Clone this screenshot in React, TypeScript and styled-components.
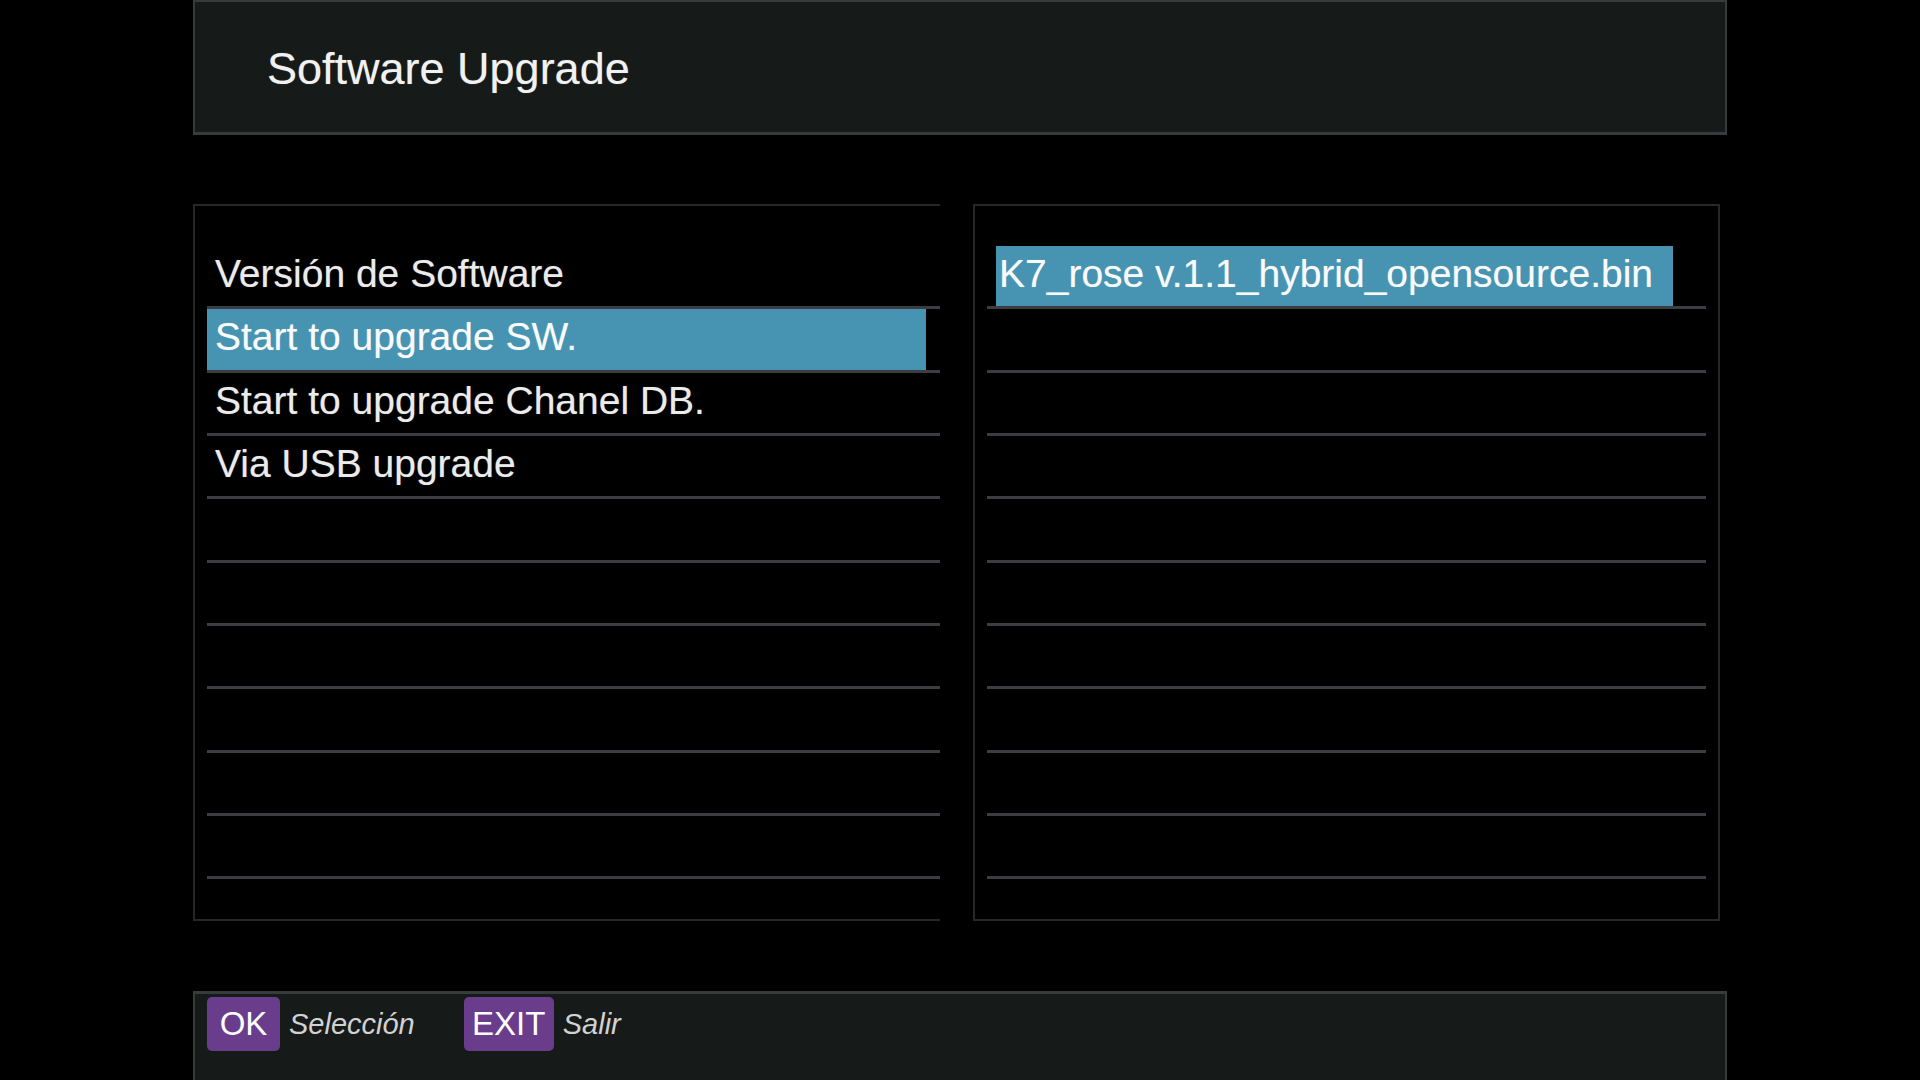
import React from 'react';
import styled, { createGlobalStyle } from 'styled-components';

const GlobalStyle = createGlobalStyle`
    html, body {
        margin: 0;
        padding: 0;
        background: #000;
    }
    * {
        box-sizing: border-box;
    }
`

const ROW_COUNT = 10

const menuItems = [
    "Versión de Software",
    "Start to upgrade SW.",
    "Start to upgrade Chanel DB.",
    "Via USB upgrade",
]

const files = [
    "K7_rose v.1.1_hybrid_opensource.bin",
]

// pad a list out to the full number of rows so the empty lines still draw
const padRows = (items: string[]) => {
    const rows = [...items]
    while (rows.length < ROW_COUNT) rows.push("")
    return rows
}

function App() {
    const selectedMenu = 1
    const selectedFile = 0

    return (
        <>
            <GlobalStyle />
            <Screen>
                <Header>
                    <Title>Software Upgrade</Title>
                </Header>

                <Panels>
                    <Panel $open>
                        {padRows(menuItems).map((item, i) => (
                            <Row key={i}>
                                <Cell $active={i === selectedMenu} $inset={0} $width="calc(100% - 14px)" $pad={8}>
                                    {item}
                                </Cell>
                            </Row>
                        ))}
                    </Panel>
                    <Panel>
                        {padRows(files).map((item, i) => (
                            <Row key={i}>
                                <Cell $active={i === selectedFile} $inset={9} $width="677px" $pad={3}>
                                    {item}
                                </Cell>
                            </Row>
                        ))}
                    </Panel>
                </Panels>

                <Footer>
                    <KeyCap $width={73}>OK</KeyCap>
                    <Hint>Selección</Hint>
                    <KeyCap $width={90}>EXIT</KeyCap>
                    <Hint>Salir</Hint>
                </Footer>
            </Screen>
        </>
    );
}

const Screen = styled.div`
    width: 1920px;
    height: 1080px;
    overflow: hidden;
    background: #000;
    display: flex;
    flex-direction: column;
    align-items: flex-start;
    padding-left: 193px;
    font-family: "Liberation Sans", Arial, sans-serif;
`

const Header = styled.div`
    width: 1534px;
    height: 135px;
    flex-shrink: 0;
    background: #161a19;
    border: 2px solid #383b3b;
    border-bottom-width: 3px;
    display: flex;
    align-items: center;
    padding-left: 72px;
`

const Title = styled.span`
    font-size: 45px;
    color: #f1f1f1;
    padding-top: 4px;
    text-shadow: 0 0 1px rgba(255, 255, 255, 0.4);
`

const Panels = styled.div`
    display: flex;
    gap: 33px;
    margin-top: 69px;
    flex-shrink: 0;
`

const Panel = styled.div<{ $open?: boolean }>`
    width: 747px;
    height: 717px;
    border: 2px solid #262828;
    border-right: ${props => props.$open ? "none" : "2px solid #262828"};
    padding: 40px ${props => props.$open ? 0 : 12}px 0 12px;
    display: flex;
    flex-direction: column;
`

const Row = styled.div`
    height: 63.33px;
    flex-shrink: 0;
    border-bottom: 3px solid #3b3d40;
    display: flex;
`

const Cell = styled.div<{ $active: boolean; $inset: number; $width: string; $pad: number }>`
    width: ${props => props.$width};
    margin-left: ${props => props.$inset}px;
    display: flex;
    align-items: center;
    padding: 0 0 5px ${props => props.$pad}px;
    background: ${props => props.$active ? "#4694b1" : "transparent"};
    color: ${props => props.$active ? "#fafafa" : "#ebebeb"};
    font-size: 39px;
    line-height: 39px;
    white-space: nowrap;
    text-shadow: 0 0 1px rgba(255, 255, 255, 0.4);
`

const Footer = styled.div`
    width: 1534px;
    height: 120px;
    flex-shrink: 0;
    margin-top: 70px;
    background: #161a19;
    border: 2px solid #383b3b;
    border-top-width: 3px;
    border-bottom: none;
    display: flex;
    align-items: flex-start;
    padding: 3px 0 0 12px;
`

const KeyCap = styled.div<{ $width: number }>`
    width: ${props => props.$width}px;
    height: 54px;
    border-radius: 5px;
    background: #6a3c8c;
    color: #fff;
    font-size: 33px;
    display: flex;
    align-items: center;
    justify-content: center;
`

const Hint = styled.span`
    height: 54px;
    display: flex;
    align-items: center;
    margin: 0 49px 0 9px;
    font-size: 29px;
    font-style: italic;
    color: #d2d2d2;
`

export default App;
